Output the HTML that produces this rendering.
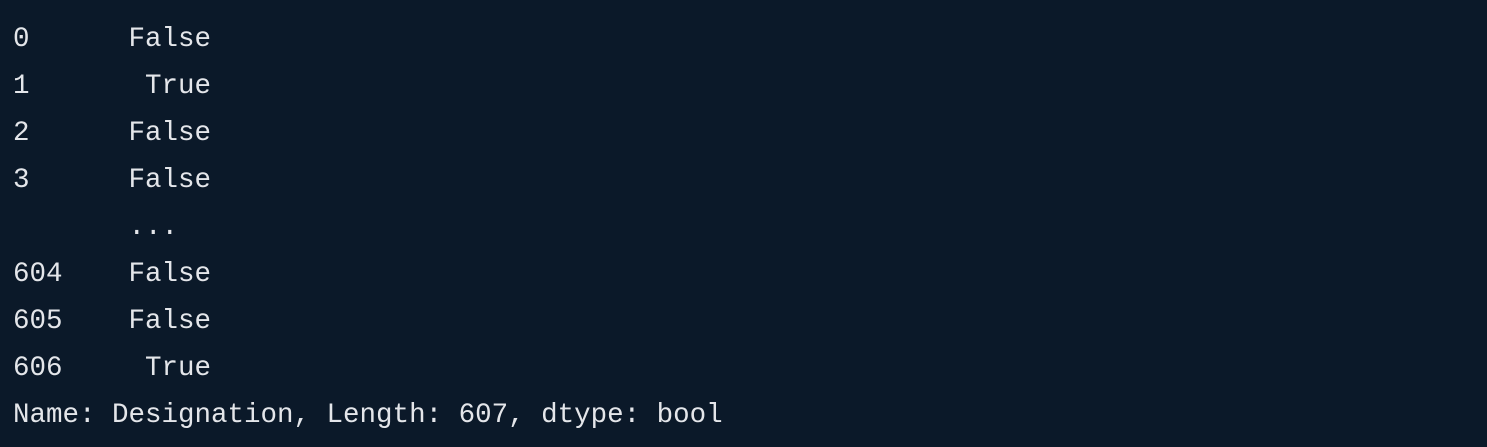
<!DOCTYPE html>
<html><head><meta charset="utf-8"><style>
html,body{margin:0;padding:0;background:#0b1929;width:1487px;height:447px;overflow:hidden}
pre{margin:0;position:absolute;left:13px;top:16px;font-family:"Liberation Mono",monospace;font-size:27.5px;line-height:47px;color:#e4e6ea}
</style></head><body>
<pre>0      False
1       True
2      False
3      False
       ...
604    False
605    False
606     True
Name: Designation, Length: 607, dtype: bool</pre>
</body></html>
